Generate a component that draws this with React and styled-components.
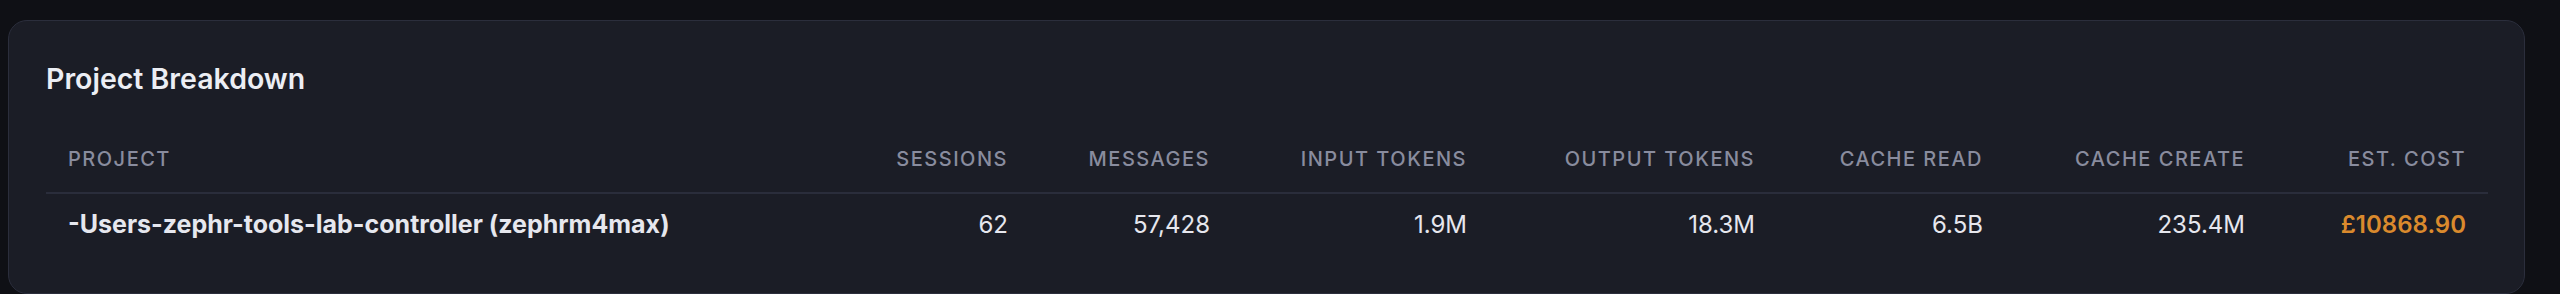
import React from "react";
import styled, { createGlobalStyle } from "styled-components";

const GlobalStyle = createGlobalStyle`
  html, body {
    margin: 0;
    padding: 0;
    background: #0f1015;
  }
  body {
    font-family: Inter, "Noto Sans", "Liberation Sans", sans-serif;
    -webkit-font-smoothing: antialiased;
  }
`;

const Page = styled.div`
  padding: 20px 35px 0 8px;
`;

const Card = styled.section`
  background: #1b1d26;
  border: 1.6px solid #2b2e3c;
  border-radius: 19px;
  padding: 41px 37px 38px 37px;
  box-sizing: border-box;
  height: 274px;
`;

const Title = styled.h2`
  margin: 0 0 32px 0;
  font-size: 28.5px;
  font-weight: 600;
  line-height: 34px;
  color: #eceef4;
`;

const Table = styled.table`
  width: 100%;
  border-collapse: collapse;
  table-layout: fixed;
`;

const Col = styled.col`
  width: ${(p) => p.$w}px;
`;

const Th = styled.th`
  padding: 19px 22px 21px;
  font-size: 20px;
  font-weight: 500;
  line-height: 24px;
  letter-spacing: 0.075em;
  text-transform: uppercase;
  color: #898c9e;
  text-align: ${(p) => (p.$left ? "left" : "right")};
  border-bottom: 2px solid #2a2d3b;
  white-space: nowrap;
`;

const Td = styled.td`
  padding: 16px 22px 15px;
  font-size: ${(p) => (p.$lead ? "25px" : "24px")};
  line-height: 29px;
  font-weight: ${(p) => (p.$lead ? 700 : p.$accent ? 600 : 400)};
  color: ${(p) => (p.$accent ? "#da8a2d" : "#e6e7ee")};
  text-align: ${(p) => (p.$left ? "left" : "right")};
  white-space: nowrap;
`;

const columns = [
  { key: "project", label: "Project", w: 793, left: true },
  { key: "sessions", label: "Sessions", w: 191 },
  { key: "messages", label: "Messages", w: 202 },
  { key: "input", label: "Input Tokens", w: 257 },
  { key: "output", label: "Output Tokens", w: 288 },
  { key: "cacheRead", label: "Cache Read", w: 228 },
  { key: "cacheCreate", label: "Cache Create", w: 262 },
  { key: "cost", label: "Est. Cost", w: 221 },
];

const rows = [
  {
    project: "-Users-zephr-tools-lab-controller (zephrm4max)",
    sessions: "62",
    messages: "57,428",
    input: "1.9M",
    output: "18.3M",
    cacheRead: "6.5B",
    cacheCreate: "235.4M",
    cost: "£10868.90",
  },
];

export default function App() {
  return (
    <>
      <GlobalStyle />
      <Page>
        <Card>
          <Title>Project Breakdown</Title>
          <Table>
            <colgroup>
              {columns.map((c) => (
                <Col key={c.key} $w={c.w} />
              ))}
            </colgroup>
            <thead>
              <tr>
                {columns.map((c) => (
                  <Th key={c.key} $left={c.left}>
                    {c.label}
                  </Th>
                ))}
              </tr>
            </thead>
            <tbody>
              {rows.map((r, i) => (
                <tr key={i}>
                  {columns.map((c) => (
                    <Td
                      key={c.key}
                      $left={c.left}
                      $lead={c.key === "project"}
                      $accent={c.key === "cost"}
                    >
                      {r[c.key]}
                    </Td>
                  ))}
                </tr>
              ))}
            </tbody>
          </Table>
        </Card>
      </Page>
    </>
  );
}
